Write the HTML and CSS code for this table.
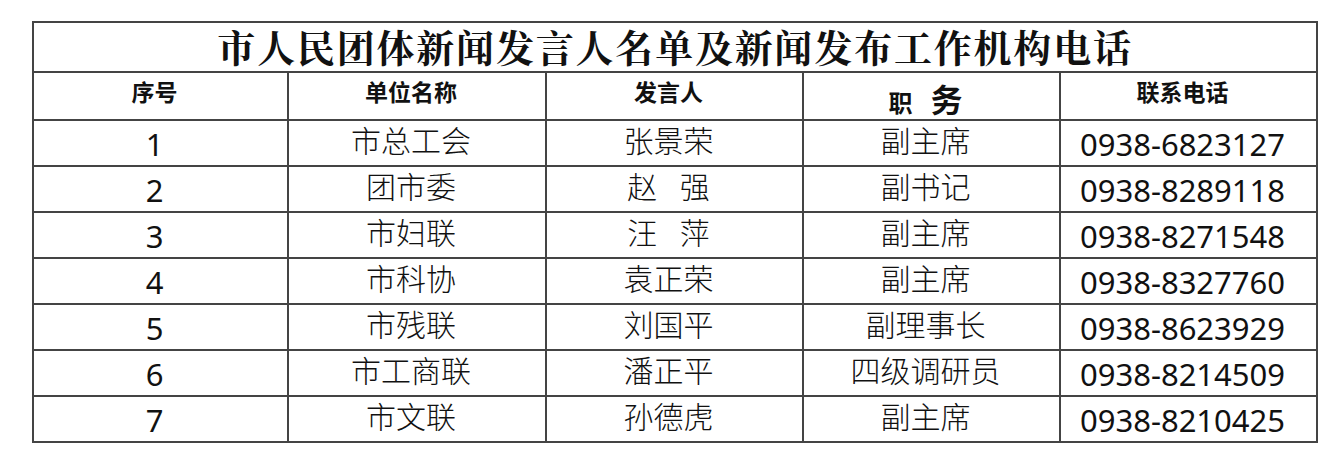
FILE: index.html
```html
<!DOCTYPE html>
<html lang="zh-CN">
<head>
<meta charset="utf-8">
<title>市人民团体新闻发言人名单及新闻发布工作机构电话</title>
<link rel="stylesheet" href="styles.css">
</head>
<body>
<table class="roster">
  <colgroup>
    <col class="c1"><col class="c2"><col class="c3"><col class="c4"><col class="c5">
  </colgroup>
  <thead>
    <tr class="title-row"><th colspan="5" class="title">市人民团体新闻发言人名单及新闻发布工作机构电话</th></tr>
    <tr class="head-row">
      <th>序号</th>
      <th>单位名称</th>
      <th>发言人</th>
      <th class="duty"><span class="zhi">职</span><span class="wu">务</span></th>
      <th>联系电话</th>
    </tr>
  </thead>
  <tbody>
    <tr><td class="num">1</td><td class="cjk">市总工会</td><td class="cjk">张景荣</td><td class="cjk">副主席</td><td class="num">0938-6823127</td></tr>
    <tr><td class="num">2</td><td class="cjk">团市委</td><td class="cjk spaced">赵 强</td><td class="cjk">副书记</td><td class="num">0938-8289118</td></tr>
    <tr><td class="num">3</td><td class="cjk">市妇联</td><td class="cjk spaced">汪 萍</td><td class="cjk">副主席</td><td class="num">0938-8271548</td></tr>
    <tr><td class="num">4</td><td class="cjk">市科协</td><td class="cjk">袁正荣</td><td class="cjk">副主席</td><td class="num">0938-8327760</td></tr>
    <tr><td class="num">5</td><td class="cjk">市残联</td><td class="cjk">刘国平</td><td class="cjk">副理事长</td><td class="num">0938-8623929</td></tr>
    <tr><td class="num">6</td><td class="cjk">市工商联</td><td class="cjk">潘正平</td><td class="cjk">四级调研员</td><td class="num">0938-8214509</td></tr>
    <tr><td class="num">7</td><td class="cjk">市文联</td><td class="cjk">孙德虎</td><td class="cjk">副主席</td><td class="num">0938-8210425</td></tr>
  </tbody>
</table>
</body>
</html>
```
FILE: styles.css
```css
html, body {
  margin: 0;
  padding: 0;
  background: #ffffff;
}

body {
  padding: 21px 0 0 32px;
  font-family: "Noto Sans CJK SC", "Noto Sans", sans-serif;
  color: #111111;
}

.roster {
  border-collapse: collapse;
  table-layout: fixed;
  width: 1286px;
}

.c1 { width: 255px; }
.c2 { width: 258px; }
.c3 { width: 257px; }
.c4 { width: 257px; }
.c5 { width: 257px; }

.roster th,
.roster td {
  border: 2px solid #444444;
  padding: 0 12px 0 0;
  text-align: center;
  vertical-align: middle;
  line-height: 1;
  white-space: nowrap;
}

.title-row {
  height: 50px;
}

.head-row {
  height: 48px;
}

tbody tr {
  height: 46px;
}

.title {
  font-family: "Noto Serif CJK SC", "Noto Sans CJK SC", serif;
  font-weight: 700;
  font-size: 38px;
  letter-spacing: 1.8px;
  padding: 0 0 2px 0 !important;
}

.head-row th {
  font-size: 23px;
  font-weight: 700;
  padding-bottom: 10px;
}

.head-row th.duty {
  padding-bottom: 0;
  padding-top: 4px;
}

.zhi {
  font-size: 24px;
  font-weight: 700;
  margin-right: 18px;
}

.wu {
  font-size: 32px;
  font-weight: 700;
}

.cjk {
  font-size: 30px;
  font-weight: 300;
  padding-bottom: 8px !important;
}

.spaced {
  word-spacing: 16px;
}

.num {
  font-family: "Noto Sans", "Open Sans", sans-serif;
  font-size: 31px;
  font-weight: 400;
  padding-top: 3px !important;
}
```
